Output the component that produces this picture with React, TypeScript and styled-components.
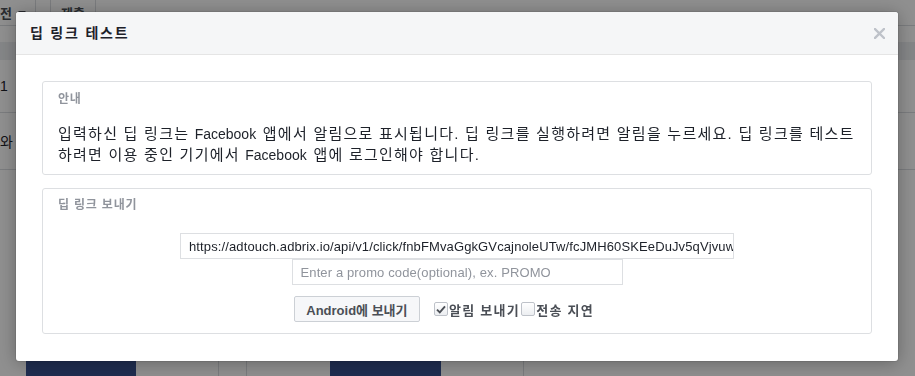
import React from "react";
import styled, { createGlobalStyle } from "styled-components";

const GlobalStyle = createGlobalStyle`
  * { box-sizing: border-box; }
  html, body { margin: 0; padding: 0; }
  body {
    font-family: "Liberation Sans", "Noto Sans CJK KR", sans-serif;
    background: #ffffff;
    overflow: hidden;
  }
`;

const KR = `"Liberation Sans", "Noto Sans CJK KR", sans-serif`;

/* ---------- background page ---------- */
const Page = styled.div`
  width: 915px;
  height: 376px;
  background: #ffffff;
  display: flex;
  flex-direction: column;
  overflow: hidden;
  color: #4b4f56;
  font-family: ${KR};
`;

const TopBar = styled.div`
  height: 26px;
  display: flex;
  align-items: stretch;
  border-bottom: 1px solid #dadde1;
`;

const TabButton = styled.div`
  width: 36px;
  display: flex;
  align-items: center;
  gap: 6px;
  font-size: 13px;
  font-weight: bold;
  border-right: 1px solid #dadde1;
`;

const Caret = styled.span`
  width: 0;
  height: 0;
  border-left: 4px solid transparent;
  border-right: 4px solid transparent;
  border-top: 4px solid #4b4f56;
`;

const SubmitButton = styled.div`
  margin-left: 14px;
  width: 46px;
  display: flex;
  align-items: center;
  justify-content: center;
  font-size: 13px;
  font-weight: bold;
  border-left: 1px solid #dadde1;
  border-right: 1px solid #dadde1;
`;

const Band = styled.div`
  height: 18px;
  margin-top: 16px;
  background: #eceef1;
`;

const TableRow = styled.div<{ $h: number }>`
  height: ${(p) => p.$h}px;
  border-bottom: 1px solid #dadde1;
  display: flex;
  align-items: center;
  font-size: 14px;
  color: #1d2129;
`;

const BottomStrip = styled.div`
  margin-top: auto;
  height: 16px;
  display: flex;
`;

const Spacer = styled.div<{ $w: number; $line?: boolean }>`
  width: ${(p) => p.$w}px;
  border-right: ${(p) => (p.$line ? "1px solid #dadde1" : "none")};
`;

const NavyBlock = styled.div<{ $w: number }>`
  width: ${(p) => p.$w}px;
  background: #37508f;
`;

/* ---------- modal ---------- */
const Overlay = styled.div`
  position: fixed;
  inset: 0;
  background: rgba(0, 0, 0, 0.44);
  padding: 12px 0 0 16px;
`;

const Modal = styled.div`
  width: 882px;
  background: #ffffff;
  border-radius: 3px;
  box-shadow: 0 2px 18px rgba(0, 0, 0, 0.3), 0 0 0 1px rgba(0, 0, 0, 0.08);
  font-family: ${KR};
  overflow: hidden;
`;

const Header = styled.div`
  height: 43px;
  background: #f5f6f7;
  border-bottom: 1px solid #e5e5e5;
  display: flex;
  align-items: center;
  justify-content: space-between;
  padding: 0 13px 0 14px;
`;

const Title = styled.h2`
  margin: 0;
  font-size: 14px;
  font-weight: bold;
  color: #1d2129;
  line-height: 18px;
  letter-spacing: 1.8px;
`;

const CloseButton = styled.button`
  border: 0;
  background: transparent;
  padding: 0;
  width: 11px;
  height: 11px;
  display: flex;
  cursor: pointer;
`;

const Body = styled.div`
  padding: 26px 26px 27px;
  display: flex;
  flex-direction: column;
  gap: 13px;
`;

const Card = styled.section<{ $pt: number; $pb: number }>`
  border: 1px solid #dddfe2;
  border-radius: 3px;
  padding: ${(p) => p.$pt}px 15px ${(p) => p.$pb}px;
`;

const CardLabel = styled.div`
  font-size: 12px;
  font-weight: bold;
  color: #90949c;
  line-height: 18px;
  letter-spacing: 0.8px;
`;

const InfoText = styled.p`
  margin: 15px 0 0;
  font-size: 15px;
  line-height: 21px;
  color: #1d2129;
  letter-spacing: 1.25px;
  white-space: nowrap;
`;

const Brand = styled.span`
  font-size: 14px;
  line-height: 1;
  letter-spacing: 0;
  margin-right: 1.25px;
`;

const Form = styled.div`
  margin-top: 19px;
  display: flex;
  flex-direction: column;
  align-items: center;
`;

const TextInput = styled.input<{ $w: number }>`
  width: ${(p) => p.$w}px;
  height: 26px;
  border: 1px solid #dddfe2;
  border-radius: 0;
  padding: 0 0 0 8px;
  font-family: "Liberation Sans", sans-serif;
  font-size: 13px;
  letter-spacing: 0.12px;
  color: #1d2129;
  outline: none;
  background: #fff;
  &::placeholder {
    color: #90949c;
  }
`;

const ActionRow = styled.div`
  margin-top: 11px;
  display: flex;
  align-items: center;
  padding-right: 25px;
`;

const SendButton = styled.button`
  height: 26px;
  width: 126px;
  padding: 0 8px;
  border: 1px solid #ccd0d5;
  border-radius: 2px;
  background: #f6f7f9;
  color: #4b4f56;
  font-family: ${KR};
  font-size: 13px;
  font-weight: bold;
  margin-right: 14px;
  cursor: pointer;
`;

const CheckLabel = styled.label`
  display: flex;
  align-items: center;
  font-size: 13px;
  font-weight: bold;
  color: #4b4f56;
  letter-spacing: 1.3px;
  margin-right: 1px;
`;

const Box = styled.span`
  width: 14px;
  height: 14px;
  border: 1px solid #bec2c9;
  border-radius: 2px;
  background: linear-gradient(#ffffff, #eceef1);
  display: flex;
  align-items: center;
  justify-content: center;
  margin-right: 1px;
`;

const Check: React.FC<{ checked?: boolean; label: string }> = ({ checked, label }) => (
  <CheckLabel>
    <Box>
      {checked && (
        <svg width="10" height="9" viewBox="0 0 10 9">
          <path d="M1 4.6 L3.8 7.4 L9 1.4" fill="none" stroke="#4b4f56" strokeWidth="1.9" />
        </svg>
      )}
    </Box>
    {label}
  </CheckLabel>
);

export default function App() {
  return (
    <>
      <GlobalStyle />
      <Page>
        <TopBar>
          <TabButton>
            전 <Caret />
          </TabButton>
          <SubmitButton>제출</SubmitButton>
        </TopBar>
        <Band />
        <TableRow $h={53}>1</TableRow>
        <TableRow $h={57}>와</TableRow>
        <BottomStrip>
          <Spacer $w={26} />
          <NavyBlock $w={110} />
          <Spacer $w={83} $line />
          <Spacer $w={28} $line />
          <Spacer $w={83} />
          <NavyBlock $w={111} />
          <Spacer $w={83} $line />
        </BottomStrip>
      </Page>
      <Overlay>
        <Modal>
          <Header>
            <Title>딥 링크 테스트</Title>
            <CloseButton aria-label="닫기">
              <svg width="11" height="11" viewBox="0 0 11 11">
                <path d="M1 1 L10 10 M10 1 L1 10" stroke="#bec2c9" strokeWidth="2.4" strokeLinecap="square" />
              </svg>
            </CloseButton>
          </Header>
          <Body>
            <Card $pt={8} $pb={9}>
              <CardLabel>안내</CardLabel>
              <InfoText>
                입력하신 딥 링크는 <Brand>Facebook</Brand> 앱에서 알림으로 표시됩니다. 딥 링크를 실행하려면 알림을
                누르세요. 딥 링크를 테스트
                <br />
                하려면 이용 중인 기기에서 <Brand>Facebook</Brand> 앱에 로그인해야 합니다.
              </InfoText>
            </Card>
            <Card $pt={7} $pb={11}>
              <CardLabel>딥 링크 보내기</CardLabel>
              <Form>
                <TextInput
                  $w={554}
                  readOnly
                  defaultValue="https://adtouch.adbrix.io/api/v1/click/fnbFMvaGgkGVcajnoleUTw/fcJMH60SKEeDuJv5qVjvuw"
                />
                <TextInput $w={331} placeholder="Enter a promo code(optional), ex. PROMO" />
                <ActionRow>
                  <SendButton>Android에 보내기</SendButton>
                  <Check checked label="알림 보내기" />
                  <Check label="전송 지연" />
                </ActionRow>
              </Form>
            </Card>
          </Body>
        </Modal>
      </Overlay>
    </>
  );
}
